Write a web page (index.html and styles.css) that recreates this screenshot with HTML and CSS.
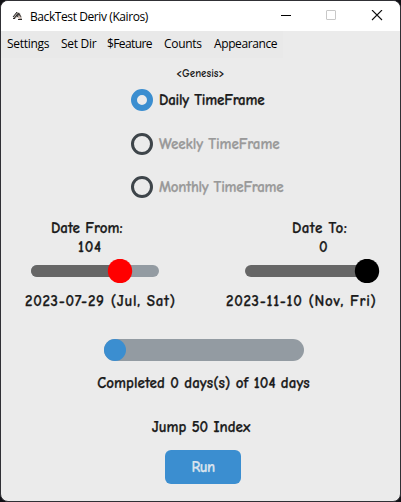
FILE: index.html
```html
<!DOCTYPE html>
<html lang="en">
<head>
<meta charset="utf-8">
<title>BackTest Deriv (Kairos)</title>
<link rel="stylesheet" href="styles.css">
</head>
<body>
<div class="window">
  <header class="titlebar">
    <svg class="app-icon" width="12" height="10" viewBox="0 0 12 10"><path d="M1 6 5 1 8 2 9 5 10 8 8 8 5 6 3 8Z" fill="#aaa5a1"/><path d="M1 6 5 1M2.500 7 6.500 2M5 6 7 2M7 3 9 6M1 7.500H3M6 8.500H10" stroke="#292726" fill="none"/><path d="M6.500 5.500H8.500V7.500H6.500Z" fill="#e4c8bb"/></svg>
    <span class="title">BackTest Deriv (Kairos)</span>
    <svg class="controls" width="108" height="12" viewBox="0 0 108 12" fill="none"><path d="M0 5.500H10" stroke="#000"/><rect x="45.500" y=".5" width="9" height="9" rx=".5" stroke="#c8c8c8"/><path d="M91 0 101 10M101 0 91 10" stroke="#111" stroke-width="1.100"/></svg>
  </header>
  <nav class="menu"><span class="m1">Settings</span><span class="m2">Set Dir</span><span class="m3">$Feature</span><span class="m4">Counts</span><span class="m5">Appearance</span></nav>
  <main>
    <p class="signature"><span>&lt;Genesis&gt;</span></p>
    <div class="radios">
      <div class="radio selected"><i></i><span class="daily">Daily TimeFrame</span></div>
      <div class="radio"><i></i><span class="weekly">Weekly TimeFrame</span></div>
      <div class="radio"><i></i><span class="monthly">Monthly TimeFrame</span></div>
    </div>
    <div class="dates">
      <section class="from">
        <p class="label">Date From:</p>
        <p class="value">104</p>
        <svg class="slider" width="136" height="24"><rect x="1" y="6" width="128" height="12" rx="6" fill="#939ba2"/><path d="M7 6H90V18H7A6 6 0 0 1 7 6Z" fill="#666"/><circle cx="90" cy="12" r="12.200" fill="#f00"/></svg>
        <p class="date">2023-07-29 (Jul, Sat)</p>
      </section>
      <section class="to">
        <p class="label">Date To:</p>
        <p class="value">0</p>
        <svg class="slider" width="136" height="24"><path d="M7 6H123V18H7A6 6 0 0 1 7 6Z" fill="#666"/><circle cx="123" cy="12" r="12.200" fill="#000"/></svg>
        <p class="date">2023-11-10 (Nov, Fri)</p>
      </section>
    </div>
    <div class="progress"><i></i></div>
    <p class="completed">Completed 0 days(s) of 104 days</p>
    <p class="index">Jump 50 Index</p>
    <button>Run</button>
  </main>
</div>
</body>
</html>
```
FILE: styles.css
```css
* { box-sizing: border-box; }
body { margin: 0; background: #101015; }
p { margin: 0; }
svg, i { display: block; flex: none; }
.window { width: 401px; height: 502px; border: 1px solid #303035; border-radius: 8px; overflow: hidden; background: #ebebeb; }
.titlebar { height: 30px; background: #fff; display: flex; align-items: center; padding-left: 11px; font: 12px "Segoe UI", "Open Sans", sans-serif; color: #000; }
.title { margin-left: 6px; width: 251px; white-space: nowrap; letter-spacing: -.41px; }
.menu { height: 27px; width: 282px; background: #e9e9e9; display: grid; grid-template-columns: 54px 46px 57px 50px 1fr; padding-left: 6px; font: 12px/26px "Segoe UI", "Open Sans", sans-serif; color: #000; white-space: nowrap; letter-spacing: -.3px; }
.m3 { letter-spacing: -.6px; }
.m5 { letter-spacing: -.4px; }
main { display: flex; flex-direction: column; align-items: center; color: #1a1a1a; font: 700 15px/18px "Comic Sans MS", "Comic Neue", Lato, sans-serif; white-space: nowrap; -webkit-text-stroke: .25px currentColor; }
.signature { align-self: flex-start; margin: 8px 0 0 175px; font-size: 11px; line-height: 16px; -webkit-text-stroke: 0; }
.radios { align-self: flex-start; margin: 7px 0 0 130px; display: grid; gap: 21.5px; }
.radio { height: 22px; display: flex; align-items: center; gap: 6px; color: #999; }
.radio i { width: 22px; height: 22px; border: 3px solid #3e454a; border-radius: 50%; }
.radio.selected { color: #1a1a1a; }
.radio.selected i { border: 6px solid #3b8ed0; }
.daily { letter-spacing: -.2px; }
.weekly { letter-spacing: -.08px; }
.monthly { letter-spacing: -.25px; }
.dates { align-self: stretch; margin-top: 21px; display: grid; grid-template-columns: 200px 199px; }
.dates section { display: grid; grid-template-rows: 19px 21px 24px; }
.label { letter-spacing: 0; }
.value { letter-spacing: .8px; }
.from .label { padding-left: 50px; }
.from .value { padding-left: 77px; }
.to .label { padding-left: 91px; letter-spacing: .45px; }
.to .value { padding-left: 118px; }
.slider { margin-left: 29px; }
.to .slider { margin-left: 43px; }
.date { margin-top: 9px; padding-left: 24px; letter-spacing: .7px; }
.to .date { padding-left: 25px; }
.progress { width: 200px; height: 22px; border-radius: 11px; background: #939ba2; margin: 29px 0 0 7px; }
.progress i { width: 22px; height: 22px; border-radius: 50%; background: #3b8ed0; }
.completed { margin: 13px 0 0 6px; letter-spacing: .05px; }
.index { margin: 26px 0 0 1px; letter-spacing: 0; }
button { width: 76px; height: 34px; margin: 14px 0 0 5px; padding: 0; border: 0; border-radius: 6px; background: #3b8ed0; color: #dce4ee; font: inherit; letter-spacing: -.5px; }
```
